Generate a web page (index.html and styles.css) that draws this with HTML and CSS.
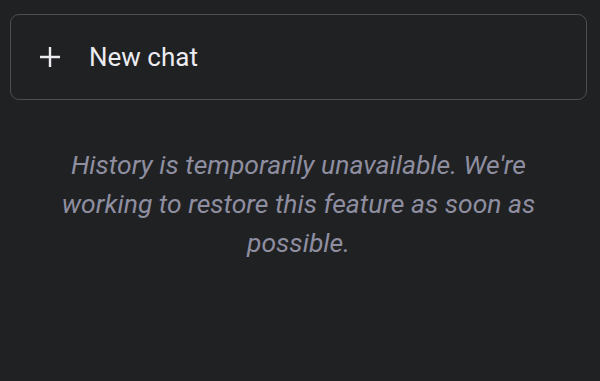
FILE: index.html
```html
<!DOCTYPE html>
<html>
<head>
<meta charset="utf-8">
<link rel="stylesheet" href="styles.css">
</head>
<body>
<div class="sidebar">
  <button class="new-chat">
    <svg class="plus" width="22" height="22" viewBox="0 0 22 22"><path d="M11 1v20M1 11h20" stroke="#ececf1" stroke-width="2.4" fill="none"/></svg>
    <span>New chat</span>
  </button>
  <p class="notice">History is temporarily unavailable. We're working to restore this feature as soon as possible.</p>
</div>
</body>
</html>
```
FILE: styles.css
```css
html, body {
  margin: 0;
  background: #202123;
  height: 100%;
}
.sidebar {
  padding: 14px 13px 0 10px;
  font-family: Roboto, "Liberation Sans", sans-serif;
}
.new-chat {
  box-sizing: border-box;
  width: 100%;
  height: 86px;
  display: flex;
  align-items: center;
  gap: 28px;
  padding: 0 0 0 28px;
  background: transparent;
  border: 1.5px solid #4d4d4f;
  border-radius: 9px;
  color: #ececf1;
  font-family: Roboto, "Liberation Sans", sans-serif;
  font-size: 26px;
  text-align: left;
}
.plus { flex: none; }
.notice {
  margin: 45px 40px 0 40px;
  text-align: center;
  font-style: italic;
  font-size: 26.5px;
  line-height: 39px;
  color: #8e8ea0;
}
```
